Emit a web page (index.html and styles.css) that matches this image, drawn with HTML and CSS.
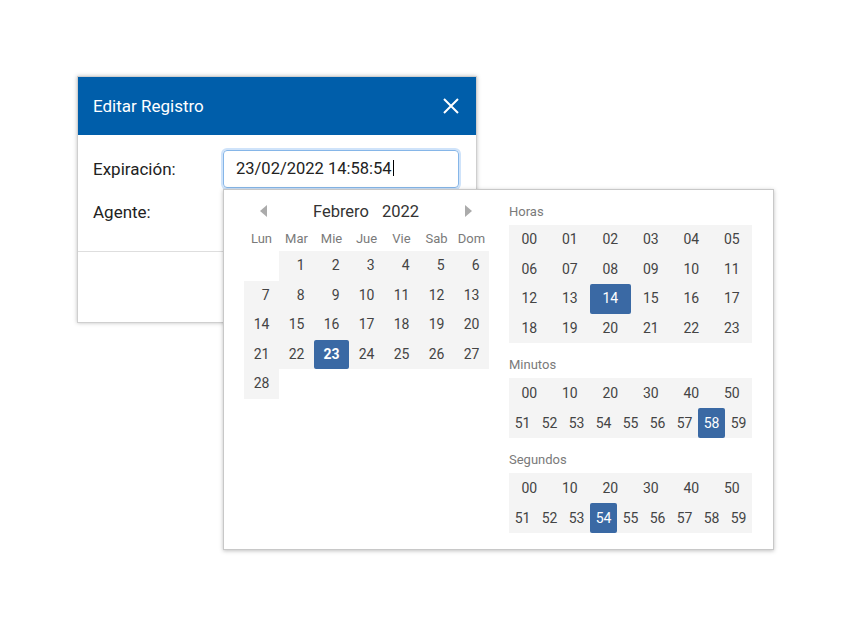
FILE: index.html
```html
<!DOCTYPE html>
<html lang="es">

<head>
    <meta charset="UTF-8">
    <meta name="viewport" content="width=device-width, initial-scale=1.0">
    <title>Editar Registro</title>
    <link rel="stylesheet" href="styles.css">
</head>

<body>
    <div class="dialog">
        <div class="dialog-header">
            <span class="dialog-title">Editar Registro</span>
            <button class="close-btn" aria-label="Cerrar">
                <svg width="16" height="16" viewBox="0 0 16 16">
                    <path d="M1 1 L15 15 M15 1 L1 15" stroke="#fff" stroke-width="2" fill="none" />
                </svg>
            </button>
        </div>

        <div class="dialog-body">
            <div class="form-row">
                <label>Expiración:</label>
                <div class="field">
                    <div class="date-input">23/02/2022 14:58:54<span class="caret"></span></div>

                    <!-- selector de fecha y hora -->
                    <div class="picker">
                        <div class="calendar">
                            <div class="cal-nav">
                                <span class="arrow prev"></span>
                                <span class="cal-title">Febrero<span class="cal-year">2022</span></span>
                                <span class="arrow next"></span>
                            </div>
                            <div class="weekdays">
                                <span>Lun</span><span>Mar</span><span>Mie</span><span>Jue</span><span>Vie</span><span>Sab</span><span>Dom</span>
                            </div>
                            <div class="days">
                                <span class="empty"></span>
                                <span>1</span><span>2</span><span>3</span><span>4</span><span>5</span><span>6</span>
                                <span>7</span><span>8</span><span>9</span><span>10</span><span>11</span><span>12</span><span>13</span>
                                <span>14</span><span>15</span><span>16</span><span>17</span><span>18</span><span>19</span><span>20</span>
                                <span>21</span><span>22</span><span class="selected">23</span><span>24</span><span>25</span><span>26</span><span>27</span>
                                <span>28</span>
                            </div>
                        </div>

                        <div class="time">
                            <div class="time-section">
                                <div class="time-label">Horas</div>
                                <div class="hours">
                                    <span>00</span><span>01</span><span>02</span><span>03</span><span>04</span><span>05</span>
                                    <span>06</span><span>07</span><span>08</span><span>09</span><span>10</span><span>11</span>
                                    <span>12</span><span>13</span><span class="selected">14</span><span>15</span><span>16</span><span>17</span>
                                    <span>18</span><span>19</span><span>20</span><span>21</span><span>22</span><span>23</span>
                                </div>
                            </div>

                            <div class="time-section">
                                <div class="time-label">Minutos</div>
                                <div class="tens">
                                    <div class="tens-row">
                                        <span>00</span><span>10</span><span>20</span><span>30</span><span>40</span><span>50</span>
                                    </div>
                                    <div class="tens-row">
                                        <span>51</span><span>52</span><span>53</span><span>54</span><span>55</span><span>56</span><span>57</span><span class="selected">58</span><span>59</span>
                                    </div>
                                </div>
                            </div>

                            <div class="time-section">
                                <div class="time-label">Segundos</div>
                                <div class="tens">
                                    <div class="tens-row">
                                        <span>00</span><span>10</span><span>20</span><span>30</span><span>40</span><span>50</span>
                                    </div>
                                    <div class="tens-row">
                                        <span>51</span><span>52</span><span>53</span><span class="selected">54</span><span>55</span><span>56</span><span>57</span><span>58</span><span>59</span>
                                    </div>
                                </div>
                            </div>
                        </div>
                    </div>
                </div>
            </div>
            <div class="form-row">
                <label>Agente:</label>
                <div class="field"></div>
            </div>
        </div>

        <div class="dialog-footer"></div>
    </div>
</body>

</html>
```

FILE: styles.css
```css
* {
    margin: 0;
    padding: 0;
    box-sizing: border-box;
}

html,
body {
    min-height: 100vh;
}

body {
    font-family: Roboto, "Noto Sans", sans-serif;
    background-color: #fff;
    color: #222;
    padding-top: 76px;
}

/* dialogo */
.dialog {
    position: relative;
    width: 400px;
    margin-left: 77px;
    border: 1px solid #cfcfcf;
    background-color: #fff;
    box-shadow: 0 0 4px rgba(0, 0, 0, 0.25);
}

.dialog-header {
    height: 58px;
    background-color: #005eaa;
    color: #fff;
    display: flex;
    align-items: center;
    justify-content: space-between;
    padding: 0 17px 0 15px;
}

.dialog-title {
    font-size: 17px;
}

.close-btn {
    width: 16px;
    height: 16px;
    border: none;
    background: none;
    display: flex;
    cursor: pointer;
}

.dialog-body {
    padding: 15px 16px 20px 15px;
    display: flex;
    flex-direction: column;
    gap: 5px;
}

.form-row {
    display: flex;
    align-items: center;
    height: 38px;
}

.form-row label {
    width: 130px;
    font-size: 17px;
    color: #222;
}

.field {
    position: relative;
    width: 236px;
    height: 38px;
}

.date-input {
    height: 38px;
    border: 1px solid #86b6e8;
    border-radius: 4px;
    box-shadow: 0 0 0 2px #cfe3fa;
    padding: 0 12px;
    font-size: 16.5px;
    line-height: 36px;
    color: #222;
    white-space: nowrap;
}

.caret {
    display: inline-block;
    width: 1px;
    height: 16px;
    background-color: #000;
    vertical-align: -2px;
    margin-left: 1px;
}

.dialog-footer {
    height: 71px;
    border-top: 1px solid #dedede;
}

/* selector */
.picker {
    position: absolute;
    top: 39px;
    left: 0;
    width: 551px;
    display: flex;
    gap: 20px;
    padding: 10px 20px 16px;
    background-color: #fff;
    border: 1px solid #c8c8c8;
    box-shadow: 0 1px 4px rgba(0, 0, 0, 0.25);
    z-index: 2;
}

.calendar {
    width: 245px;
}

.cal-nav {
    height: 22px;
    display: flex;
    align-items: center;
    justify-content: space-between;
    padding: 0 17px 0 16px;
}

.cal-title {
    font-size: 16.5px;
    color: #333;
}

.cal-year {
    margin-left: 13px;
}

.arrow {
    width: 0;
    height: 0;
    border-top: 6.5px solid transparent;
    border-bottom: 6.5px solid transparent;
}

.arrow.prev {
    border-right: 7px solid #ababab;
}

.arrow.next {
    border-left: 7px solid #ababab;
}

.weekdays {
    display: grid;
    grid-template-columns: repeat(7, 35px);
    margin-top: 5px;
    height: 24px;
    line-height: 24px;
    font-size: 13px;
    color: #7a7a7a;
    text-align: center;
}

.days {
    display: grid;
    grid-template-columns: repeat(7, 35px);
    grid-auto-rows: 29.6px;
    font-size: 14px;
    color: #444;
}

.days span {
    background-color: #f4f4f4;
    text-align: right;
    padding-right: 9.5px;
    line-height: 29.6px;
}

.days span.empty {
    background-color: transparent;
}

.days span.selected {
    background-color: #3a69a4;
    color: #fff;
    font-weight: bold;
    text-align: center;
    padding-right: 0;
    border-radius: 2px;
}

.time {
    width: 243px;
}

.time-section + .time-section {
    margin-top: 10px;
}

.time-label {
    font-size: 13px;
    line-height: 23px;
    color: #7a7a7a;
    margin-bottom: 2px;
}

.hours {
    display: grid;
    grid-template-columns: repeat(6, 1fr);
    grid-auto-rows: 29.5px;
    background-color: #f4f4f4;
    font-size: 14px;
    color: #444;
}

.tens {
    background-color: #f4f4f4;
    font-size: 14px;
    color: #444;
}

.tens-row {
    display: flex;
    height: 30px;
}

.hours span,
.tens-row span {
    flex: 1;
    text-align: center;
    line-height: 29.5px;
}

.tens-row span {
    line-height: 30px;
}

.hours span.selected,
.tens-row span.selected {
    background-color: #3a69a4;
    color: #fff;
    border-radius: 2px;
}
```
